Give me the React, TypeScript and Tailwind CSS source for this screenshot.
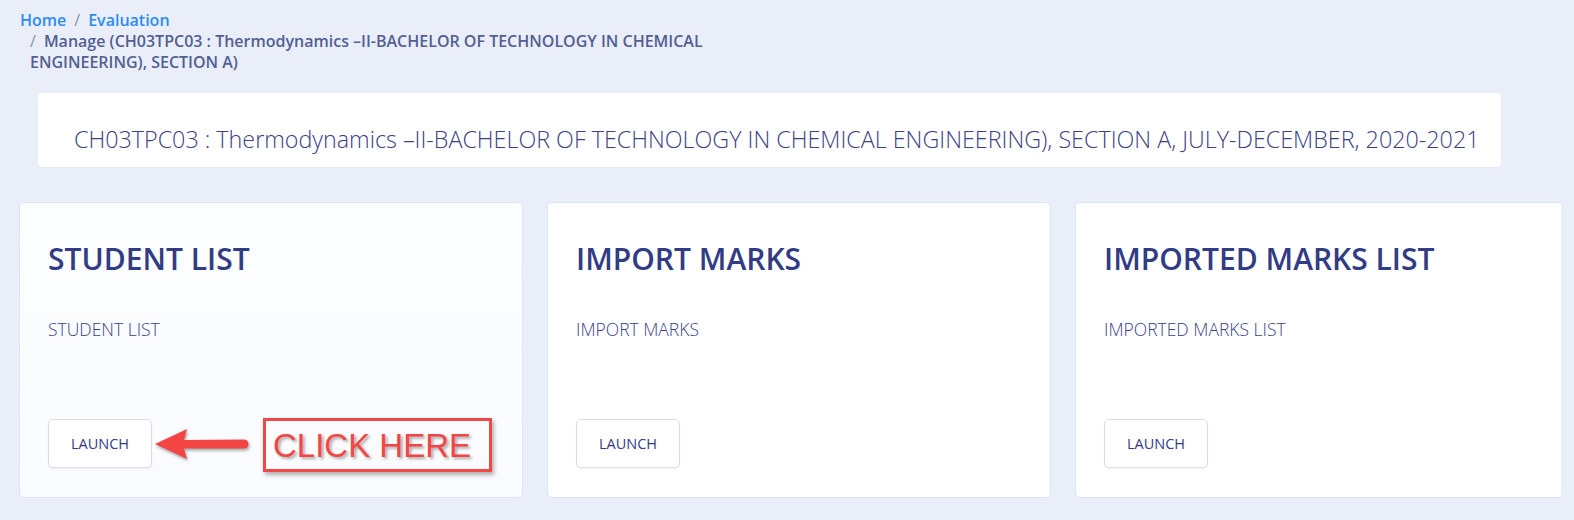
import React from "react";

const cards = [
  { title: "STUDENT LIST", sub: "STUDENT LIST", tint: true },
  { title: "IMPORT MARKS", sub: "IMPORT MARKS", tint: false },
  { title: "IMPORTED MARKS LIST", sub: "IMPORTED MARKS LIST", tint: false },
];

const ClickHere = () => (
  <>
    <svg
      width="100"
      height="36"
      viewBox="0 0 100 36"
      className="absolute left-[135px] top-[224px] drop-shadow-[1px_2px_1.5px_rgba(0,0,0,0.35)]"
    >
      <path d="M0 17 L32 2 L29 13 L89 12.5 a4.5 4.5 0 0 1 0 9 L29 21.5 L32 32 Z" fill="#f44545" />
    </svg>
    <div className="absolute left-[243px] top-[215px] flex h-[54px] w-[229px] items-center border-[3px] border-[#f24747] pl-[7px] shadow-[2px_3px_4px_rgba(0,0,0,0.3)]">
      <span className="font-['Liberation_Sans',Arial,sans-serif] text-[33px] leading-none text-[#f44545] [text-shadow:2px_2px_3px_rgba(0,0,0,0.35)]">
        CLICK HERE
      </span>
    </div>
  </>
);

export default function App() {
  return (
    <div className="min-h-[520px] w-[1574px] overflow-hidden bg-[#e9eef8] font-['Open_Sans','Noto_Sans',sans-serif]">
      <div className="flex w-[745px] flex-wrap px-[20px] pt-[10px] text-[16px] font-semibold leading-[21px]">
        <span className="text-[#2d8cf0]">Home</span>
        <span className="mx-[8px] font-normal text-[#8a93a6]">/</span>
        <span className="text-[#2d8cf0]">Evaluation</span>
        <div className="ml-[10px] w-[700px] text-[#535f93] before:mr-[8px] before:font-normal before:text-[#8a93a6] before:content-['/']">
          Manage (CH03TPC03 : Thermodynamics –II-BACHELOR OF TECHNOLOGY IN CHEMICAL ENGINEERING), SECTION A)
        </div>
      </div>

      <div className="ml-[38px] mt-[20px] flex h-[74px] w-[1463px] items-center rounded-[4px] bg-white pl-[36px] pt-[17px] shadow-[0_1px_2px_rgba(0,0,0,0.04)]">
        <span className="text-[23.3px] font-light leading-[30px] text-[#3d4183]">
          CH03TPC03 : Thermodynamics –II-BACHELOR OF TECHNOLOGY IN CHEMICAL ENGINEERING), SECTION A, JULY-DECEMBER, 2020-2021
        </span>
      </div>

      <div className="mt-[35px] w-[1561px] overflow-hidden pl-[19px]">
        <div className="flex w-[1560px] gap-[24px]">
          {cards.map((c, i) => (
            <div
              key={c.title}
              className={
                "relative flex h-[296px] w-[504px] shrink-0 flex-col items-start rounded-[5px] border border-[#dde6f6] px-[28px] pt-[34px] " +
                (c.tint ? "bg-gradient-to-b from-[#fcfdfe] to-[#f9fbfe]" : "bg-white")
              }
            >
              <h2 className="text-[30px] font-semibold leading-[44px] text-[#323c85]">{c.title}</h2>
              <p className="mt-[36px] text-[17.5px] font-light leading-[24px] text-[#3a4282]">{c.sub}</p>
              <button className="mt-[78px] h-[49px] w-[104px] rounded-[5px] border border-[#dcdce2] bg-white text-[14.5px] font-medium text-[#323c85] shadow-[0_1px_2px_rgba(0,0,0,0.05)]">
                LAUNCH
              </button>
              {i === 0 && <ClickHere />}
            </div>
          ))}
        </div>
      </div>
    </div>
  );
}
